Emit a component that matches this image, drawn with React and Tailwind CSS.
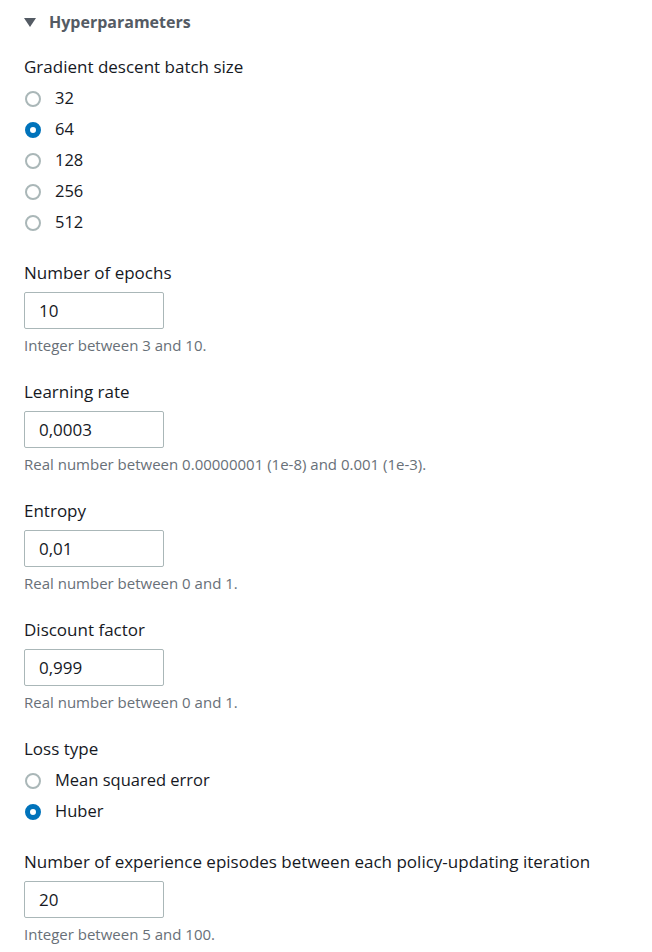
import { useState } from "react"

function Radio({ checked, label, onSelect }) {
  return (
    <label className="flex h-[31px] cursor-pointer items-center" onClick={onSelect}>
      <span
        className={
          checked
            ? "box-border h-[16px] w-[16px] rounded-full border-[5px] border-[#0073bb] bg-white"
            : "box-border h-[16px] w-[16px] rounded-full border-2 border-[#aab7b8] bg-white"
        }
      />
      <span className="ml-[14px] text-[16.5px] text-[#16191f]">{label}</span>
    </label>
  )
}

function RadioGroup({ label, options, initial }) {
  const [value, setValue] = useState(initial)
  return (
    <div className="mb-[24px]">
      <p className="h-[22px] text-[17px] leading-[22px] text-[#16191f]">{label}</p>
      <div className="mt-[5px] pl-[1px]">
        {options.map((opt) => (
          <Radio key={opt} label={opt} checked={value === opt} onSelect={() => setValue(opt)} />
        ))}
      </div>
    </div>
  )
}

function NumberField({ label, value, hint }) {
  return (
    <div className="mb-[26px]">
      <p className="h-[22px] text-[17px] leading-[22px] text-[#16191f]">{label}</p>
      <input
        defaultValue={value}
        className="mt-[8px] box-border block h-[37px] w-[140px] rounded-[2px] border border-[#aab7b8] bg-white px-[14px] text-[17px] text-[#16191f] outline-none"
      />
      <p className="mt-[6px] h-[20px] text-[15px] leading-[20px] text-[#687078]">{hint}</p>
    </div>
  )
}

export default function App() {
  return (
    <div className="min-h-screen bg-white font-['Open_Sans',sans-serif]">
      <div className="pt-[11px]">
        <button className="flex h-[22px] items-center pl-[24px]">
          <svg width="12" height="10" viewBox="0 0 12 10" className="mr-[13px]">
            <polygon points="0,1 12,1 6,10" fill="#545b64" />
          </svg>
          <span className="text-[16px] font-bold text-[#545b64]">Hyperparameters</span>
        </button>
      </div>
      <div className="flex flex-col pl-[24px] pt-[23px]">
        <RadioGroup label="Gradient descent batch size" options={["32", "64", "128", "256", "512"]} initial="64" />
        <NumberField label="Number of epochs" value="10" hint="Integer between 3 and 10." />
        <NumberField label="Learning rate" value="0,0003" hint="Real number between 0.00000001 (1e-8) and 0.001 (1e-3)." />
        <NumberField label="Entropy" value="0,01" hint="Real number between 0 and 1." />
        <NumberField label="Discount factor" value="0,999" hint="Real number between 0 and 1." />
        <RadioGroup label="Loss type" options={["Mean squared error", "Huber"]} initial="Huber" />
        <NumberField
          label="Number of experience episodes between each policy-updating iteration"
          value="20"
          hint="Integer between 5 and 100."
        />
      </div>
    </div>
  )
}
